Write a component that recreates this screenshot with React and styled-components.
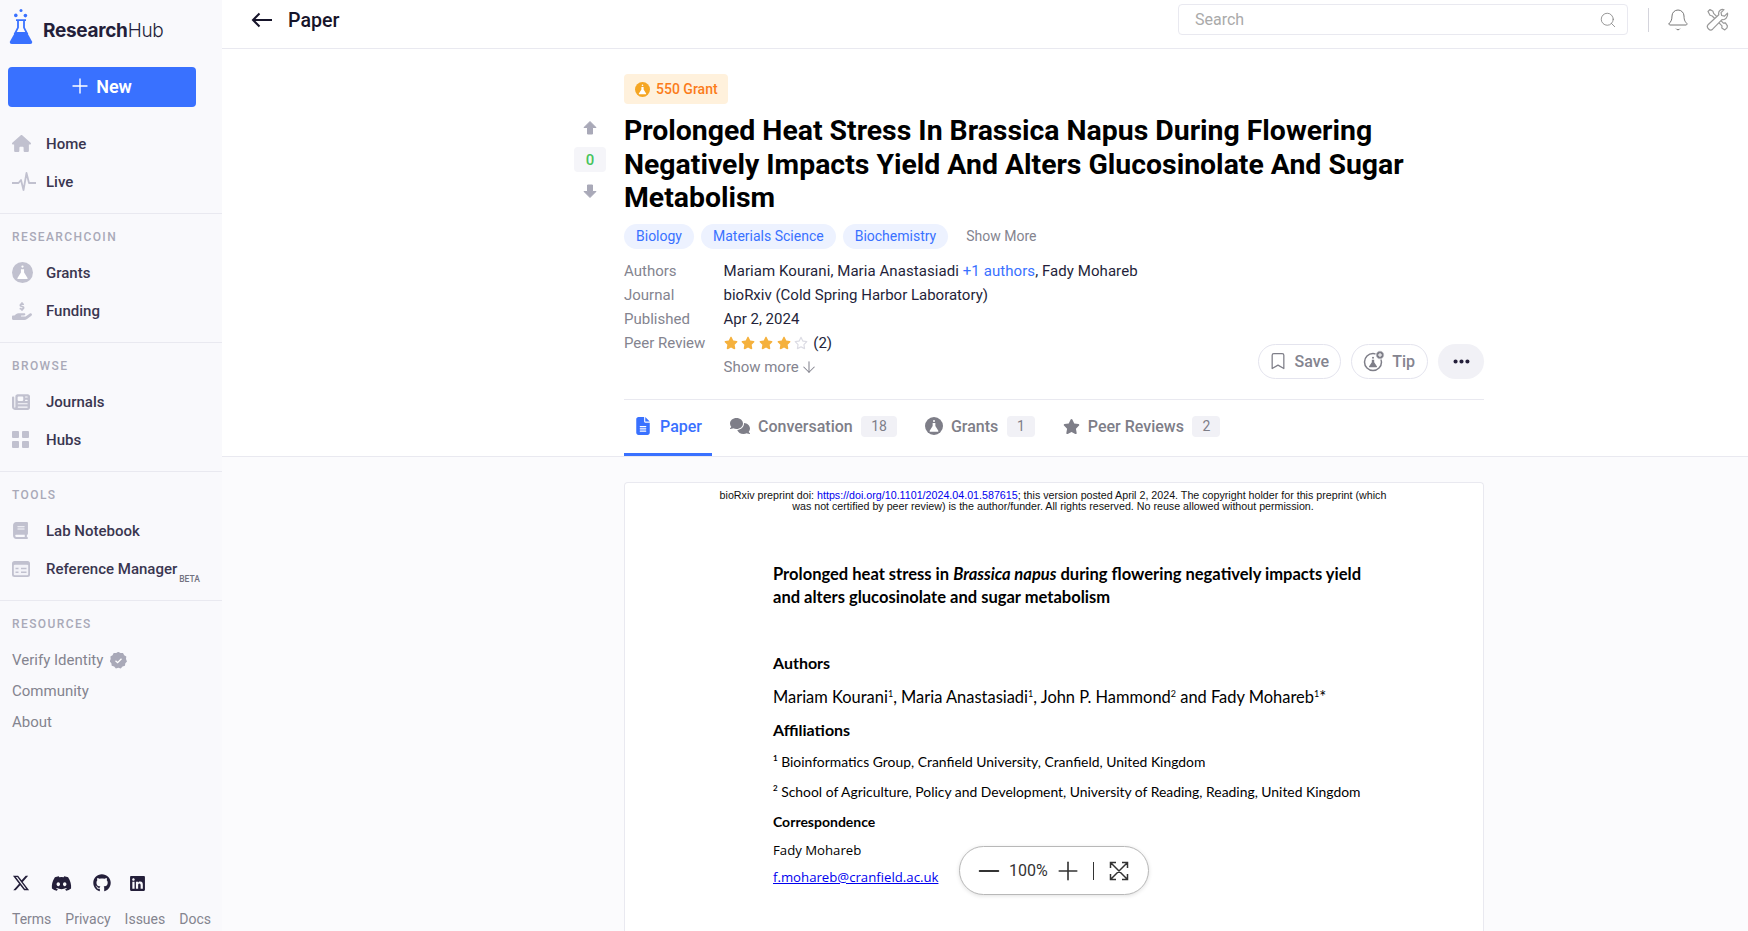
import React from "react";
import styled, { createGlobalStyle } from "styled-components";
import { Bell, Bookmark, Minus, Plus, Search, ArrowDown } from "lucide-react";
import {
  FaHouse,
  FaNewspaper,
  FaBook,
  FaXTwitter,
  FaDiscord,
  FaGithub,
  FaLinkedin,
  FaFileLines,
  FaComments,
  FaStar,
  FaRegStar,
  FaHandHoldingDollar,
  FaEllipsis,
} from "react-icons/fa6";

const GlobalStyle = createGlobalStyle`
  html, body {
    margin: 0;
    padding: 0;
    height: 100%;
    overflow: hidden;
    background: #fff;
    font-family: Roboto, "Liberation Sans", sans-serif;
  }
  * { box-sizing: border-box; }
`;

const ICON = "#c1c1cf";

function FlaskCircle({ size = 20, color = ICON, fill = "#fff" }) {
  return (
    <svg width={size} height={size} viewBox="0 0 20 20">
      <circle cx="10" cy="10" r="10" fill={color} />
      <circle cx="10" cy="4.4" r="1.1" fill={fill} />
      <path d="M8.5 6.8h3v3.2l3.3 5.2c.3.6 0 1.1-.7 1.1H5.9c-.7 0-1-.5-.7-1.1L8.5 10z" fill={fill} />
    </svg>
  );
}

function Logo() {
  return (
    <svg width="24" height="36" viewBox="0 0 24 36">
      <circle cx="12" cy="1.6" r="1.5" fill="#3971ff" />
      <circle cx="6.8" cy="6.4" r="1.8" fill="#3971ff" />
      <circle cx="16.4" cy="6.6" r="1.8" fill="#3971ff" />
      <path d="M7 11.2h10M9 11.2v7.4L6.2 24h11.6L15 18.6v-7.4" fill="none" stroke="#3971ff" strokeWidth="1.8" />
      <path d="M6.2 23h11.6l5.1 9.2c.7 1.4 0 2.8-1.8 2.8H2.9C1.1 35 .4 33.6 1.1 32.2z" fill="#3971ff" />
    </svg>
  );
}

function Pulse() {
  return (
    <svg width="24" height="20" viewBox="0 0 24 20" fill="none" stroke={ICON} strokeWidth="1.8" strokeLinejoin="round">
      <path d="M0 11h6.5l2.5-3 2.5 10 3-17 2.5 10h7" />
    </svg>
  );
}

function Squares() {
  return (
    <svg width="17" height="17" viewBox="0 0 17 17" fill={ICON}>
      <rect width="7" height="7" rx="1" />
      <rect x="10" width="7" height="7" rx="1" />
      <rect y="10" width="7" height="7" rx="1" />
      <rect x="10" y="10" width="7" height="7" rx="1" />
    </svg>
  );
}

function RefCard() {
  return (
    <svg width="18" height="16" viewBox="0 0 18 16">
      <rect width="18" height="16" rx="2.5" fill={ICON} />
      <rect x="1.8" y="3.8" width="14.4" height="10.4" rx="1" fill="#f3f3f8" />
      <path d="M3.5 7.5h3M9 7.5h5.5M3.5 11.3h3M9 11.3h5.5" stroke={ICON} strokeWidth="1.6" />
    </svg>
  );
}

function VerifyBadge() {
  return (
    <svg width="17" height="17" viewBox="0 0 17 17">
      <path
        d="M8.5 0l2.3 1.3 2.6-.1 1.2 2.3 2.2 1.400-.3 2.600 1 2.400-1.700 2-.4 2.600-2.500.7-1.800 1.900-2.500-.7-2.500.7-1.800-1.900-2.500-.7-.4-2.600-1.700-2 1-2.400L.4 4.900l2.200-1.400 1.200-2.300 2.600.1z"
        fill="#a9a9b8"
        transform="translate(0 -.2) scale(.97)"
      />
      <path d="M5.5 8.7l2.1 2 3.9-4" fill="none" stroke="#fff" strokeWidth="1.3" />
    </svg>
  );
}

function ToolsIcon() {
  return (
    <svg width="23" height="23" viewBox="0 0 23 23" fill="none" stroke="#999" strokeWidth="1.2" strokeLinejoin="round">
      <path d="M2 3.5L4 1.5l3 1.8.6 2 9.8 9.800 2-.2 2 3-.4 2-2.200 2-3-2 .2-2L6.200 8 4 7.300z" />
      <path d="M21.500 5.200l-3 3-2.800-.7-.7-2.800 3-3c-2.800-.9-5.600 1-5.400 4l.2 1L2 16.800c-1.500 1.800-.5 3.200.6 4.200s2.400 1.700 4 .2l9.400-9.600c3.300.9 6.100-2.600 5.500-6.400z" fill="#fff" />
    </svg>
  );
}

function TipIcon() {
  return (
    <svg width="22" height="22" viewBox="0 0 22 22" fill="none">
      <circle cx="10" cy="12" r="8.5" stroke="#7e7e88" strokeWidth="1.5" />
      <circle cx="10" cy="7.7" r="1" fill="#7e7e88" />
      <path d="M8.8 9.8h2.400v2.400l2.800 4.200c.2.5 0 .8-.5.8H6.500c-.5 0-.7-.3-.5-.8l2.800-4.200z" fill="#7e7e88" />
      <circle cx="17" cy="5" r="4.2" fill="#7e7e88" stroke="#fff" />
      <path d="M15 5h4M17 3v4" stroke="#fff" strokeWidth="1" />
    </svg>
  );
}

function BackArrow() {
  return (
    <svg width="22" height="20" viewBox="0 0 22 20" fill="none" stroke="currentColor" strokeWidth="2">
      <path d="M21 10H2M8.5 3.5L2 10l6.5 6.5" />
    </svg>
  );
}

function VoteArrow({ down }) {
  return (
    <svg width="14" height="14" viewBox="0 0 14 14" fill="currentColor" stroke="currentColor" strokeLinejoin="round">
      <path d={down ? "M7 13.5L1 7.5h3.5V1h5v6.5H13z" : "M7 .5l6 6H9.5V13h-5V6.5H1z"} />
    </svg>
  );
}

function FullscreenIcon() {
  return (
    <svg width="24" height="24" viewBox="0 0 24 24" fill="none" stroke="currentColor" strokeWidth="1.5">
      <path d="M4 4l16 16M20 4L4 20M3.5 9V3.5H9M15 3.5h5.5V9M3.5 15v5.5H9M20.5 15v5.5H15" />
    </svg>
  );
}

const Shell = styled.div`
  display: flex;
  width: 100%;
  height: 100vh;
  overflow: hidden;
`;

const Sidebar = styled.aside`
  width: 222px;
  flex: none;
  height: 100%;
  display: flex;
  flex-direction: column;
  background: #f9f9fc;
`;

const LogoRow = styled.div`
  height: 67px;
  display: flex;
  align-items: flex-start;
  gap: 10px;
  padding: 9px 0 0 9px;
`;

const Wordmark = styled.span`
  font-family: Inter, sans-serif;
  font-size: 19px;
  line-height: 20px;
  letter-spacing: -0.3px;
  color: #241f3a;
  font-weight: 700;
  margin-top: 12px;
  & > span {
    font-weight: 300;
  }
`;

const NewButton = styled.button`
  width: 188px;
  height: 40px;
  margin: 0 0 17.5px 8px;
  flex: none;
  border: 0;
  border-radius: 4px;
  background: #3971ff;
  color: #fff;
  font: 600 18px Roboto, sans-serif;
  display: flex;
  align-items: center;
  justify-content: center;
  gap: 4px;
  padding: 0 4px 2px 0;
`;

const Section = styled.div`
  padding-bottom: 12.5px;
  border-bottom: 1px solid #e9e9f0;
`;

const SectionTitle = styled.div`
  height: 16px;
  margin: 15px 0 8.5px 12px;
  font-size: 12px;
  line-height: 16px;
  font-weight: 500;
  letter-spacing: 1.4px;
  color: #a9a9b8;
`;

const NavItem = styled.div`
  height: 38px;
  display: flex;
  align-items: center;
  padding-left: 12px;
  color: #3a3650;
  font-size: 15px;
  font-weight: 500;
`;

const NavIcon = styled.span`
  width: 34px;
  flex: none;
  display: flex;
  align-items: center;
  color: ${ICON};
`;

const Beta = styled.sup`
  font-size: 8.5px;
  color: #71717f;
  align-self: flex-end;
  margin: 0 0 4px 2px;
  line-height: 10px;
`;

const ResourceTitle = styled(SectionTitle)`
  margin-bottom: 13px;
`;

const ResourceLink = styled.div`
  height: 30.75px;
  padding-left: 12px;
  display: flex;
  align-items: center;
  gap: 7px;
  font-size: 15px;
  color: #84848f;
`;

const SideFooter = styled.div`
  margin-top: auto;
  padding: 0 0 2px 12px;
`;

const Socials = styled.div`
  display: flex;
  align-items: center;
  color: #241f3a;
  height: 24px;
  margin-bottom: 14px;
  & > svg:nth-child(1) { margin-right: 21px; }
  & > svg:nth-child(2) { margin-right: 21px; }
  & > svg:nth-child(3) { margin-right: 18px; }
`;

const FooterLinks = styled.div`
  display: flex;
  gap: 14px;
  font-size: 14px;
  line-height: 20px;
  color: #84848f;
`;

const Main = styled.main`
  flex: 1;
  min-width: 0;
  height: 100%;
  display: flex;
  flex-direction: column;
`;

const Header = styled.header`
  height: 49px;
  flex: none;
  display: flex;
  align-items: center;
  padding: 0 0 9px 29px;
  border-bottom: 1px solid #e9e9f0;
  color: #16142a;
`;

const PageName = styled.span`
  margin: 1px 0 0 15px;
  font-size: 19.6px;
  font-weight: 500;
`;

const SearchBox = styled.div`
  margin-left: auto;
  width: 450px;
  height: 31px;
  border: 1px solid #e9e9f0;
  border-radius: 4px;
  display: flex;
  align-items: center;
  justify-content: space-between;
  padding: 0 10px 0 16px;
  font-size: 16px;
  color: #aaaaaa;
`;

const HeaderDivider = styled.span`
  width: 1px;
  height: 24px;
  margin: 0 17px 0 20px;
  background: #d4d4dc;
`;

const HeaderIcons = styled.div`
  display: flex;
  align-items: center;
  gap: 16px;
  margin-right: 19px;
`;

const TopArea = styled.section`
  flex: none;
  display: flex;
  padding: 25px 0 0 352px;
  border-bottom: 1px solid #e9e9f0;
`;

const VoteColumn = styled.div`
  width: 32px;
  margin: 47px 18px 0 0;
  display: flex;
  flex-direction: column;
  align-items: center;
  gap: 12px;
  color: #a9a9b8;
`;

const VoteCount = styled.div`
  width: 32px;
  height: 25px;
  border-radius: 4px;
  background: #f5f5f9;
  color: #46c45c;
  font-size: 15px;
  font-weight: 500;
  display: flex;
  align-items: center;
  justify-content: center;
`;

const Article = styled.div`
  width: 860px;
`;

const GrantBadge = styled.div`
  width: 104px;
  height: 30px;
  border-radius: 4px;
  background: #fff1dc;
  color: #fb7c1a;
  font-size: 14px;
  font-weight: 500;
  display: flex;
  align-items: center;
  gap: 6px;
  padding-left: 11px;
`;

const Title = styled.h1`
  margin: 10px 0 9px;
  font-size: 28.4px;
  line-height: 33.5px;
  font-weight: 700;
  color: #000;
`;

const Tags = styled.div`
  display: flex;
  align-items: center;
  gap: 7px;
  margin-bottom: 10px;
`;

const Tag = styled.span`
  height: 25px;
  padding: 0 12px;
  border-radius: 13px;
  background: #edf2ff;
  color: #3971ff;
  font-size: 14px;
  display: flex;
  align-items: center;
`;

const ShowMoreTag = styled.span`
  margin-left: 11px;
  font-size: 14px;
  color: #84848f;
`;

const MetaRow = styled.div`
  display: flex;
  align-items: flex-end;
  justify-content: space-between;
  padding-bottom: 20px;
  border-bottom: 1px solid #e9e9f0;
`;

const MetaLine = styled.div`
  height: 24px;
  display: flex;
  align-items: center;
  font-size: 15px;
  letter-spacing: ${(p) => (p.$wide ? "0.07px" : "0")};
  color: #241f3a;
`;

const MetaLabel = styled.span`
  width: 99.5px;
  flex: none;
  color: #84848f;
  letter-spacing: 0;
`;

const MetaLink = styled.span`
  color: #3971ff;
`;

const Stars = styled.span`
  display: flex;
  align-items: center;
  gap: 3.7px;
  margin-right: 5px;
  font-size: 14px;
  color: #f5b13d;
  & > svg:last-child { color: #dcdce4; }
`;

const ShowMore = styled.div`
  height: 24px;
  margin-left: 99.5px;
  display: flex;
  align-items: center;
  gap: 1px;
  font-size: 15px;
  color: #84848f;
`;

const Actions = styled.div`
  display: flex;
  gap: 10px;
  align-items: center;
`;

const PillButton = styled.button`
  height: 35px;
  padding: 0 ${(p) => p.$right}px 0 ${(p) => p.$left}px;
  border: 1px solid #e4e4ee;
  border-radius: 18px;
  background: #fff;
  color: #84848f;
  font: 500 16px Roboto, sans-serif;
  display: flex;
  align-items: center;
  gap: 7px;
`;

const MoreButton = styled.button`
  width: 46px;
  height: 35px;
  border: 0;
  border-radius: 18px;
  background: #f1f1f6;
  color: #241f3a;
  display: flex;
  align-items: center;
  justify-content: center;
`;

const Tabs = styled.nav`
  display: flex;
  gap: 8px;
  height: 56px;
`;

const Tab = styled.div`
  padding: 0 10px;
  display: flex;
  align-items: center;
  gap: 8px;
  font-size: 16px;
  font-weight: 500;
  color: ${(p) => (p.$active ? "#3971ff" : "#7e7e88")};
  border-bottom: 3px solid ${(p) => (p.$active ? "#3971ff" : "transparent")};
`;

const TabCount = styled.span`
  margin-left: 0.5px;
  min-width: 28px;
  height: 21px;
  padding: 0 10px;
  border-radius: 4px;
  background: #f1f1f6;
  color: #7e7e88;
  font-size: 14px;
  font-weight: 400;
  display: flex;
  align-items: center;
  justify-content: center;
`;

const PdfArea = styled.section`
  flex: 1;
  min-height: 0;
  padding: 25px 0 0 402px;
  background: #fbfbfd;
`;

const PdfCard = styled.article`
  position: relative;
  width: 860px;
  height: 100%;
  border: 1px solid #e9e9f0;
  border-bottom: 0;
  border-radius: 4px 4px 0 0;
  background: #fff;
  color: #000;
  padding-top: 7px;
`;

const Preprint = styled.p`
  margin: 0 0 51.5px;
  padding-right: 2px;
  font-family: "Liberation Sans", Arial, sans-serif;
  font-size: 10.7px;
  line-height: 11px;
  text-align: center;
  color: #111;
  & > span { color: #0000ee; }
`;

const PdfBody = styled.div`
  padding-left: 148px;
  font-family: Lato, sans-serif;
`;

const PdfTitle = styled.h2`
  margin: 0 0 43.5px;
  font-size: 16.55px;
  line-height: 23px;
  font-weight: 700;
  white-space: nowrap;
`;

const PdfHeading = styled.h3`
  margin: 0 0 ${(p) => p.$after}px;
  font-size: ${(p) => p.$size || 16}px;
  line-height: 20px;
  font-weight: 700;
`;

const PdfNames = styled.p`
  margin: 0 0 13px;
  font-size: 16.45px;
  line-height: 20px;
  & > sup { font-size: 9px; line-height: 0; }
`;

const PdfAffil = styled.p`
  margin: 0 0 ${(p) => p.$after}px;
  font-size: 13.9px;
  line-height: 18px;
  & > sup { font-size: 8px; line-height: 0; font-weight: 700; }
`;

const PdfLine = styled.p`
  margin: 0 0 7px;
  font-family: "Open Sans", sans-serif;
  font-size: 13.2px;
  line-height: 20px;
`;

const PdfMail = styled(PdfLine)`
  color: #0000ee;
  text-decoration: underline;
`;

const ZoomPill = styled.div`
  position: absolute;
  left: 50%;
  bottom: 36px;
  transform: translateX(-50%);
  width: 190px;
  height: 49px;
  border: 1px solid #b8b8b8;
  border-radius: 25px;
  background: #fff;
  box-shadow: 0 1px 4px rgba(0, 0, 0, 0.12);
  display: flex;
  align-items: center;
  padding-left: 13px;
  font: 400 16px Roboto, sans-serif;
  color: #333;
`;

const ZoomValue = styled.span`
  margin: 0 5px 0 4px;
`;

const ZoomDivider = styled.span`
  width: 1px;
  height: 18px;
  margin: 0 13px 0 10px;
  background: #333;
`;

const NAV_GROUPS = [
  {
    title: "RESEARCHCOIN",
    items: [
      { label: "Grants", icon: <FlaskCircle size={21} /> },
      { label: "Funding", icon: <FaHandHoldingDollar size={20} /> },
    ],
  },
  {
    title: "BROWSE",
    items: [
      { label: "Journals", icon: <FaNewspaper size={18} /> },
      { label: "Hubs", icon: <Squares /> },
    ],
  },
  {
    title: "TOOLS",
    items: [
      { label: "Lab Notebook", icon: <FaBook size={17} /> },
      { label: "Reference Manager", icon: <RefCard />, beta: true },
    ],
  },
];

function SideNav() {
  return (
    <Sidebar>
      <LogoRow>
        <Logo />
        <Wordmark>
          Research<span>Hub</span>
        </Wordmark>
      </LogoRow>
      <NewButton>
        <Plus size={24} strokeWidth={1.4} />
        New
      </NewButton>
      <Section>
        <NavItem>
          <NavIcon>
            <FaHouse size={19} />
          </NavIcon>
          Home
        </NavItem>
        <NavItem>
          <NavIcon>
            <Pulse />
          </NavIcon>
          Live
        </NavItem>
      </Section>
      {NAV_GROUPS.map((group) => (
        <Section key={group.title}>
          <SectionTitle>{group.title}</SectionTitle>
          {group.items.map((item) => (
            <NavItem key={item.label}>
              <NavIcon>{item.icon}</NavIcon>
              {item.label}
              {item.beta && <Beta>BETA</Beta>}
            </NavItem>
          ))}
        </Section>
      ))}
      <ResourceTitle>RESOURCES</ResourceTitle>
      <ResourceLink>
        Verify Identity <VerifyBadge />
      </ResourceLink>
      <ResourceLink>Community</ResourceLink>
      <ResourceLink>About</ResourceLink>
      <SideFooter>
        <Socials>
          <FaXTwitter size={18} />
          <FaDiscord size={21} />
          <FaGithub size={18} />
          <FaLinkedin size={17} />
        </Socials>
        <FooterLinks>
          <span>Terms</span>
          <span>Privacy</span>
          <span>Issues</span>
          <span>Docs</span>
        </FooterLinks>
      </SideFooter>
    </Sidebar>
  );
}

function PaperHead() {
  return (
    <TopArea>
      <VoteColumn>
        <VoteArrow />
        <VoteCount>0</VoteCount>
        <VoteArrow down />
      </VoteColumn>
      <Article>
        <GrantBadge>
          <FlaskCircle size={15} color="#f5a623" />
          550 Grant
        </GrantBadge>
        <Title>
          Prolonged Heat Stress In Brassica Napus During Flowering
          <br />
          Negatively Impacts Yield And Alters Glucosinolate And Sugar
          <br />
          Metabolism
        </Title>
        <Tags>
          <Tag>Biology</Tag>
          <Tag>Materials Science</Tag>
          <Tag>Biochemistry</Tag>
          <ShowMoreTag>Show More</ShowMoreTag>
        </Tags>
        <MetaRow>
          <div>
            <MetaLine $wide>
              <MetaLabel>Authors</MetaLabel>
              Mariam Kourani, Maria Anastasiadi&nbsp;<MetaLink>+1 authors</MetaLink>, Fady Mohareb
            </MetaLine>
            <MetaLine>
              <MetaLabel>Journal</MetaLabel>
              bioRxiv (Cold Spring Harbor Laboratory)
            </MetaLine>
            <MetaLine>
              <MetaLabel>Published</MetaLabel>
              Apr 2, 2024
            </MetaLine>
            <MetaLine>
              <MetaLabel>Peer Review</MetaLabel>
              <Stars>
                <FaStar />
                <FaStar />
                <FaStar />
                <FaStar />
                <FaRegStar />
              </Stars>
              (2)
            </MetaLine>
            <ShowMore>
              Show more <ArrowDown size={18} strokeWidth={1.4} />
            </ShowMore>
          </div>
          <Actions>
            <PillButton $left={9} $right={11}>
              <Bookmark size={20} strokeWidth={1.5} color="#7e7e88" />
              Save
            </PillButton>
            <PillButton $left={11} $right={12}>
              <TipIcon />
              Tip
            </PillButton>
            <MoreButton>
              <FaEllipsis size={19} />
            </MoreButton>
          </Actions>
        </MetaRow>
        <Tabs>
          <Tab $active>
            <FaFileLines size={18} />
            Paper
          </Tab>
          <Tab>
            <FaComments size={20} />
            Conversation
            <TabCount>18</TabCount>
          </Tab>
          <Tab>
            <FlaskCircle size={18} color="#7e7e88" />
            Grants
            <TabCount>1</TabCount>
          </Tab>
          <Tab>
            <FaStar size={17} />
            Peer Reviews
            <TabCount>2</TabCount>
          </Tab>
        </Tabs>
      </Article>
    </TopArea>
  );
}

function PaperPage() {
  return (
    <PdfArea>
      <PdfCard>
        <Preprint>
          bioRxiv preprint doi: <span>https://doi.org/10.1101/2024.04.01.587615</span>; this version posted April 2, 2024. The copyright holder for this preprint (which
          <br />
          was not certified by peer review) is the author/funder. All rights reserved. No reuse allowed without permission.
        </Preprint>
        <PdfBody>
          <PdfTitle>
            Prolonged heat stress in <em>Brassica napus</em> during flowering negatively impacts yield
            <br />
            and alters glucosinolate and sugar metabolism
          </PdfTitle>
          <PdfHeading $after={14}>Authors</PdfHeading>
          <PdfNames>
            Mariam Kourani<sup>1</sup>, Maria Anastasiadi<sup>1</sup>, John P. Hammond<sup>2</sup> and Fady Mohareb<sup>1</sup>*
          </PdfNames>
          <PdfHeading $after={13}>Affiliations</PdfHeading>
          <PdfAffil $after={12}>
            <sup>1</sup> Bioinformatics Group, Cranfield University, Cranfield, United Kingdom
          </PdfAffil>
          <PdfAffil $after={11}>
            <sup>2</sup> School of Agriculture, Policy and Development, University of Reading, Reading, United Kingdom
          </PdfAffil>
          <PdfHeading $size={14} $after={8}>Correspondence</PdfHeading>
          <PdfLine>Fady Mohareb</PdfLine>
          <PdfMail>f.mohareb@cranfield.ac.uk</PdfMail>
        </PdfBody>
        <ZoomPill>
          <Minus size={32} strokeWidth={1.4} />
          <ZoomValue>100%</ZoomValue>
          <Plus size={30} strokeWidth={1.3} />
          <ZoomDivider />
          <FullscreenIcon />
        </ZoomPill>
      </PdfCard>
    </PdfArea>
  );
}

export default function App() {
  return (
    <>
      <GlobalStyle />
      <Shell>
        <SideNav />
        <Main>
          <Header>
            <BackArrow />
            <PageName>Paper</PageName>
            <SearchBox>
              Search
              <Search size={18} strokeWidth={1} color="#777" />
            </SearchBox>
            <HeaderDivider />
            <HeaderIcons>
              <Bell size={24} strokeWidth={1} color="#777" />
              <ToolsIcon />
            </HeaderIcons>
          </Header>
          <PaperHead />
          <PaperPage />
        </Main>
      </Shell>
    </>
  );
}
